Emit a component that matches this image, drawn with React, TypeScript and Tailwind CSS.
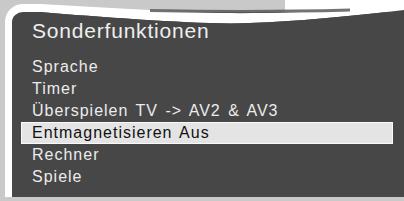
import React from "react";

const items = [
  "Sprache",
  "Timer",
  "Überspielen TV -> AV2 & AV3",
  "Entmagnetisieren Aus",
  "Rechner",
  "Spiele",
];

const selected = 3;

export default function App() {
  return (
    <div className="relative h-[201px] w-[404px] overflow-hidden bg-[#c9c9c9] font-['Liberation_Sans',Arial,sans-serif]">
      {/* Panel */}
      <div className="ml-[5px] mt-[4px] flex h-[193px] flex-col rounded-tl-[18px] border-l-[7px] border-t-[8px] border-white bg-[#474747]">
        <h1 className="relative z-10 pl-[20px] pt-[7px] text-[21px] leading-[24px] tracking-[0.8px] text-[#eeeeee]">
          Sonderfunktionen
        </h1>
        <ul className="relative z-10 mt-[13px] mr-[11px] flex flex-col">
          {items.map((label, idx) => (
            <li
              key={idx}
              className={
                idx === selected
                  ? "ml-[9px] h-[22px] border border-[#fafafa] bg-[#e4e4e4] px-[10px] text-[16px] leading-[20px] tracking-[1px] text-[#111111] [word-spacing:2px]"
                  : "ml-[9px] h-[22px] border border-transparent px-[10px] text-[16px] leading-[20px] tracking-[1px] text-[#ececec] [word-spacing:2px]"
              }
            >
              {label}
            </li>
          ))}
        </ul>
      </div>

      {/* Curled top edge of the frame */}
      <svg
        className="pointer-events-none absolute left-0 top-0 h-[26px] w-[404px]"
        viewBox="0 0 404 26"
        preserveAspectRatio="none"
      >
        <rect x="40" y="0" width="245" height="12" fill="#c9c9c9" />
        <rect x="285" y="0" width="119" height="12" fill="#ffffff" />
        <path
          d="M40 4 C 100 7, 160 11, 220 13 C 300 14, 360 9, 404 3 L404 10 C 360 15, 300 22, 230 23.5 C 180 23, 100 17, 40 12 Z"
          fill="#ffffff"
        />
        <path
          d="M40 12 C 100 17, 180 23, 230 23.5 C 300 22, 360 15, 404 10 V26 H40 Z"
          fill="#474747"
        />
        <path
          d="M150 10.5 C 200 11.5, 260 12.5, 350 10"
          stroke="#5a5a5a"
          strokeWidth="3"
          fill="none"
          opacity="0.85"
        />
      </svg>
    </div>
  );
}
